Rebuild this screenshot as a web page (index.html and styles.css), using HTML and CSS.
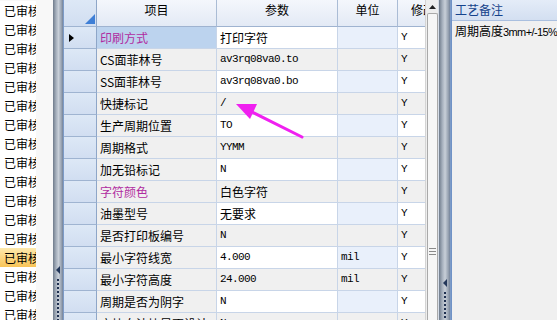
FILE: index.html
```html
<!DOCTYPE html>
<html lang="zh-CN">
<head>
  <meta charset="UTF-8">
  <title>工艺参数</title>
  <link rel="stylesheet" href="styles.css">
</head>
<body>
  <div class="window">
    <div class="list">
      <div class="item">已审核</div>
      <div class="item">已审核</div>
      <div class="item">已审核</div>
      <div class="item">已审核</div>
      <div class="item">已审核</div>
      <div class="item">已审核</div>
      <div class="item">已审核</div>
      <div class="item">已审核</div>
      <div class="item">已审核</div>
      <div class="item">已审核</div>
      <div class="item">已审核</div>
      <div class="item">已审核</div>
      <div class="item">已审核</div>
      <div class="item active">已审核</div>
      <div class="item">已审核</div>
      <div class="item">已审核</div>
      <div class="item">已审核</div>
    </div>

    <div class="splitter left-split">
      <span class="grip-arrow"></span>
      <span class="grip-dots"></span>
    </div>

    <div class="grid">
      <div class="row head">
        <div class="rh corner">
          <svg width="10" height="10" viewBox="0 0 10 10"><polygon points="10,0 10,10 0,10" fill="#3f7fd6"/></svg>
        </div>
        <div class="cell">项目</div>
        <div class="cell">参数</div>
        <div class="cell">单位</div>
        <div class="cell">修改</div>
      </div>
      <div class="row">
        <div class="rh"><svg class="pointer" width="5" height="8" viewBox="0 0 5 8"><polygon points="0,0 5,4 0,8" fill="#000"/></svg></div>
        <div class="cell name sel purple">印刷方式</div>
        <div class="cell value">打印字符</div>
        <div class="cell unit"></div>
        <div class="cell flag mono">Y</div>
      </div>
      <div class="row alt">
        <div class="rh"></div>
        <div class="cell name">CS面菲林号</div>
        <div class="cell value mono">av3rq08va0.to</div>
        <div class="cell unit"></div>
        <div class="cell flag mono">Y</div>
      </div>
      <div class="row">
        <div class="rh"></div>
        <div class="cell name">SS面菲林号</div>
        <div class="cell value mono">av3rq08va0.bo</div>
        <div class="cell unit"></div>
        <div class="cell flag mono">Y</div>
      </div>
      <div class="row alt">
        <div class="rh"></div>
        <div class="cell name">快捷标记</div>
        <div class="cell value mono">/</div>
        <div class="cell unit"></div>
        <div class="cell flag mono">Y</div>
      </div>
      <div class="row">
        <div class="rh"></div>
        <div class="cell name">生产周期位置</div>
        <div class="cell value mono">TO</div>
        <div class="cell unit"></div>
        <div class="cell flag mono">Y</div>
      </div>
      <div class="row alt">
        <div class="rh"></div>
        <div class="cell name">周期格式</div>
        <div class="cell value mono">YYMM</div>
        <div class="cell unit"></div>
        <div class="cell flag mono">Y</div>
      </div>
      <div class="row">
        <div class="rh"></div>
        <div class="cell name">加无铅标记</div>
        <div class="cell value mono">N</div>
        <div class="cell unit"></div>
        <div class="cell flag mono">Y</div>
      </div>
      <div class="row alt">
        <div class="rh"></div>
        <div class="cell name purple">字符颜色</div>
        <div class="cell value">白色字符</div>
        <div class="cell unit"></div>
        <div class="cell flag mono">Y</div>
      </div>
      <div class="row">
        <div class="rh"></div>
        <div class="cell name">油墨型号</div>
        <div class="cell value">无要求</div>
        <div class="cell unit"></div>
        <div class="cell flag mono">Y</div>
      </div>
      <div class="row alt">
        <div class="rh"></div>
        <div class="cell name">是否打印板编号</div>
        <div class="cell value mono">N</div>
        <div class="cell unit"></div>
        <div class="cell flag mono">Y</div>
      </div>
      <div class="row">
        <div class="rh"></div>
        <div class="cell name">最小字符线宽</div>
        <div class="cell value mono">4.000</div>
        <div class="cell unit mono">mil</div>
        <div class="cell flag mono">Y</div>
      </div>
      <div class="row alt">
        <div class="rh"></div>
        <div class="cell name">最小字符高度</div>
        <div class="cell value mono">24.000</div>
        <div class="cell unit mono">mil</div>
        <div class="cell flag mono">Y</div>
      </div>
      <div class="row">
        <div class="rh"></div>
        <div class="cell name">周期是否为阴字</div>
        <div class="cell value mono">N</div>
        <div class="cell unit"></div>
        <div class="cell flag mono">Y</div>
      </div>
      <div class="row alt">
        <div class="rh"></div>
        <div class="cell name">方块白油块是否设计</div>
        <div class="cell value mono">N</div>
        <div class="cell unit"></div>
        <div class="cell flag mono">Y</div>
      </div>
    </div>

    <div class="vscroll">
      <div class="sb-up">
        <svg width="7" height="4" viewBox="0 0 7 4"><polygon points="3.5,0 7,4 0,4" fill="#222"/></svg>
      </div>
      <div class="sb-thumb"><span class="sb-grip"></span></div>
    </div>

    <div class="splitter right-split">
      <span class="grip-arrow"></span>
      <span class="grip-dots"></span>
    </div>

    <div class="panel">
      <div class="panel-head">工艺备注</div>
      <div class="panel-body">周期高度<span class="latin">3mm+/-15%</span></div>
    </div>

    <!-- annotation arrow drawn over the grid -->
    <svg class="annot" width="557" height="320" viewBox="0 0 557 320">
      <line x1="302" y1="137" x2="250" y2="111" stroke="#f020f0" stroke-width="3" stroke-linecap="round"/>
      <polygon points="236,104 257,104 250,119" fill="#f020f0"/>
    </svg>
  </div>
</body>
</html>
```

FILE: styles.css
```css
/* General */
body {
  margin: 0;
  font-family: "Noto Sans CJK SC", sans-serif;
  font-size: 12px;
  color: #000;
  background: #f0f0f0;
  overflow: hidden;
}

.window {
  position: relative;
  display: flex;
  width: 557px;
  height: 320px;
  overflow: hidden;
}

/* Left list */
.list {
  width: 53px;
  flex-shrink: 0;
  background: #f8f8f8;
  padding-top: 1px;
}

.item {
  width: 32px;
  height: 19px;
  line-height: 19px;
  padding-left: 4px;
  background: #fff;
  white-space: nowrap;
  overflow: hidden;
}

.item.active {
  background: linear-gradient(#fde9ad, #f8c457);
}

/* Splitters */
.splitter {
  width: 10px;
  flex-shrink: 0;
  display: flex;
  flex-direction: column;
  align-items: center;
  background: linear-gradient(to right, #6f7b8b 0, #a5afbc 30%, #c8cfd8 55%, #96a1b0 85%, #74839a 100%);
  border-right: 1px solid #7d9bc7;
}

.left-split {
  padding-top: 266px;
}

.right-split {
  width: 11px;
  padding-top: 279px;
  border-left: 1px solid #d6dde8;
}

.grip-arrow {
  width: 0;
  height: 0;
  border-top: 4px solid transparent;
  border-bottom: 4px solid transparent;
  border-right: 4px solid #23375a;
}

.grip-dots {
  margin-top: 5px;
  width: 2px;
  flex: 1;
  background: repeating-linear-gradient(#1f3050 0, #1f3050 2px, transparent 2px, transparent 4px);
}

/* Grid */
.grid {
  width: 361px;
  flex-shrink: 0;
  overflow: hidden;
  background: #fff;
}

.row {
  display: grid;
  grid-template-columns: 33px 120px 121px 60px 40px;
  height: 22px;
}

.cell {
  box-sizing: border-box;
  padding: 0 3px;
  line-height: 21px;
  white-space: nowrap;
  overflow: hidden;
  border-right: 1px solid #c8d5e8;
  border-bottom: 1px solid #c8d5e8;
  background: #fff;
}

.rh {
  box-sizing: border-box;
  display: flex;
  align-items: center;
  padding-left: 5px;
  background: linear-gradient(#dde8f6, #d1def1);
  border-right: 1px solid #8ea6c8;
  border-bottom: 1px solid #9fb4d1;
}

.row.head {
  height: 27px;
}

.row.head .cell {
  text-align: center;
  line-height: 20px;
  background: linear-gradient(#f4f7fc, #e3eaf5);
  border-right-color: #aabcd5;
  border-bottom-color: #9fb3d0;
}

.row.head .cell:last-child {
  text-align: left;
  padding-left: 13px;
}

.rh.corner {
  align-items: flex-end;
  justify-content: flex-end;
  padding: 0 1px 2px 0;
}

.name {
  background: #f0f0f0;
}

.unit {
  background: #e9f0fb;
}

.row.alt .value,
.row.alt .unit,
.row.alt .flag {
  background: #f0f0f0;
}

.sel {
  background: #bcd3ee;
}

.purple {
  color: #b02ca0;
}

.mono {
  font-family: "Liberation Mono", "Noto Sans CJK SC", monospace;
  font-size: 11px;
  letter-spacing: -0.6px;
}

/* Scrollbar */
.vscroll {
  width: 12px;
  flex-shrink: 0;
  display: flex;
  flex-direction: column;
  background: #eeeeee;
  border-left: 1px solid #d4d4d4;
}

.sb-up {
  height: 13px;
  display: flex;
  align-items: center;
  justify-content: center;
}

.sb-thumb {
  flex: 1;
  margin: 0 0 0 1px;
  border: 1px solid #a9a9a9;
  border-bottom: none;
  border-radius: 2px 2px 0 0;
  background: #f6f6f6;
  padding-top: 234px;
}

.sb-grip {
  display: block;
  margin: 0 1px;
  height: 7px;
  background: repeating-linear-gradient(#8a8a8a 0, #8a8a8a 1px, transparent 1px, transparent 3px);
}

/* Right panel */
.panel {
  flex: 1;
  background: #f0f0f0;
  border-left: 1px solid #6f92c6;
}

.panel-head {
  height: 20px;
  line-height: 19px;
  padding-left: 3px;
  color: #15428b;
  background: linear-gradient(#e4ecf8, #d3dff1);
  border-bottom: 1px solid #a9bfdf;
}

.panel-body {
  padding: 2px 3px;
  line-height: 16px;
  white-space: nowrap;
}

.latin {
  font-family: "Liberation Sans", sans-serif;
  font-size: 11px;
  letter-spacing: -0.6px;
}

/* Annotation */
.annot {
  position: absolute;
  left: 0;
  top: 0;
  pointer-events: none;
}
```
